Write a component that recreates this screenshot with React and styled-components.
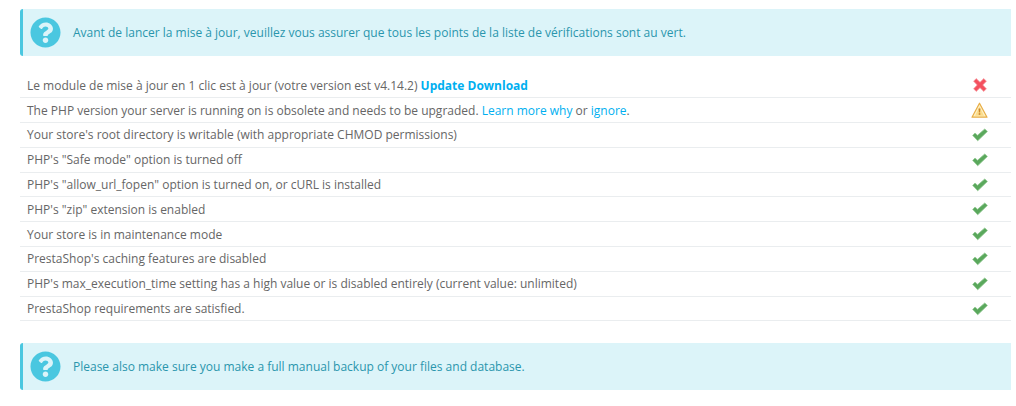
import React from 'react'
import styled, { createGlobalStyle } from 'styled-components'
import { FaQuestionCircle } from 'react-icons/fa'

const GlobalStyle = createGlobalStyle`
  html, body {
    margin: 0;
    background: #fff;
  }
  body {
    font-family: "Open Sans", "Liberation Sans", sans-serif;
    font-size: 12px;
    color: #666;
  }
`

const Page = styled.div`
  width: 1016px;
  height: 406px;
  box-sizing: border-box;
  padding: 9px 5px 0 20px;
  overflow: hidden;
`

const Alert = styled.div`
  display: flex;
  align-items: center;
  gap: 12px;
  height: 47px;
  box-sizing: border-box;
  padding-left: 7px;
  background: #dcf4f9;
  border-left: 3px solid #4ac7e0;
  border-radius: 3px 0 0 3px;
  color: #2a96ad;
  svg {
    color: #4ac7e0;
    font-size: 31px;
    flex: none;
  }
`

const Checklist = styled.table`
  width: 100%;
  margin: 17px 0 22px;
  border-collapse: collapse;
  table-layout: fixed;
`

const Row = styled.tr`
  height: 24.8px;
  border-bottom: 1px solid #eaedef;
`

const Label = styled.td`
  padding: 0 0 0 7px;
  line-height: 17px;
  color: #666;
`

const Status = styled.td`
  width: 62px;
  padding: 0 23px 0 0;
  svg {
    display: block;
    margin-left: auto;
  }
`

const Link = styled.a`
  color: #00aff0;
  font-weight: ${props => (props.$strong ? 700 : 400)};
  text-decoration: none;
`

const CrossIcon = () => (
  <svg width="16" height="16" viewBox="0 0 16 16">
    <path d="M1.6 4.2 4.2 1.6 8 5.2 11.8 1.6 14.4 4.2 10.8 8 14.4 11.8 11.8 14.4 8 10.8 4.2 14.4 1.6 11.8 5.2 8Z" fill="#f4505e" stroke="#f5a0a6" strokeWidth="0.8" strokeLinejoin="round" />
  </svg>
)

const WarningIcon = () => (
  <svg width="17" height="17" viewBox="0 0 17 17">
    <path d="M8.5 1.2 16 15.2H1Z" fill="#fdf0c4" stroke="#e8ad45" strokeWidth="1.2" strokeLinejoin="round" />
    <path d="M8.5 4.8 13 13.8H4Z" fill="#fbdc8a" />
    <path d="M7.6 6.4h1.8l-.3 4.2H7.9Z" fill="#c9862c" />
    <rect x="7.7" y="11.2" width="1.6" height="1.6" fill="#c9862c" />
  </svg>
)

const CheckIcon = () => (
  <svg width="16" height="14" viewBox="0 0 16 14">
    <path d="M.7 7.4 3 5 5.5 7.3 12.8.9 15.4 3.5 5.7 12.8Z" fill="#5aa85c" stroke="#93c994" strokeWidth="0.8" strokeLinejoin="round" />
  </svg>
)

const simpleChecks = [
  "Your store's root directory is writable (with appropriate CHMOD permissions)",
  'PHP\'s "Safe mode" option is turned off',
  'PHP\'s "allow_url_fopen" option is turned on, or cURL is installed',
  'PHP\'s "zip" extension is enabled',
  'Your store is in maintenance mode',
  "PrestaShop's caching features are disabled",
  "PHP's max_execution_time setting has a high value or is disabled entirely (current value: unlimited)",
  'PrestaShop requirements are satisfied.',
]

const App = () => {
  return (
    <Page>
      <GlobalStyle />
      <Alert>
        <FaQuestionCircle />
        Avant de lancer la mise à jour, veuillez vous assurer que tous les points de la liste de vérifications sont au vert.
      </Alert>
      <Checklist>
        <tbody>
          <Row>
            <Label>
              Le module de mise à jour en 1 clic est à jour (votre version est v4.14.2) <Link $strong href="#">Update Download</Link>
            </Label>
            <Status><CrossIcon /></Status>
          </Row>
          <Row>
            <Label>
              The PHP version your server is running on is obsolete and needs to be upgraded. <Link href="#">Learn more why</Link> or <Link href="#">ignore</Link>.
            </Label>
            <Status><WarningIcon /></Status>
          </Row>
          {simpleChecks.map(text => (
            <Row key={text}>
              <Label>{text}</Label>
              <Status><CheckIcon /></Status>
            </Row>
          ))}
        </tbody>
      </Checklist>
      <Alert>
        <FaQuestionCircle />
        Please also make sure you make a full manual backup of your files and database.
      </Alert>
    </Page>
  )
}

export default App
